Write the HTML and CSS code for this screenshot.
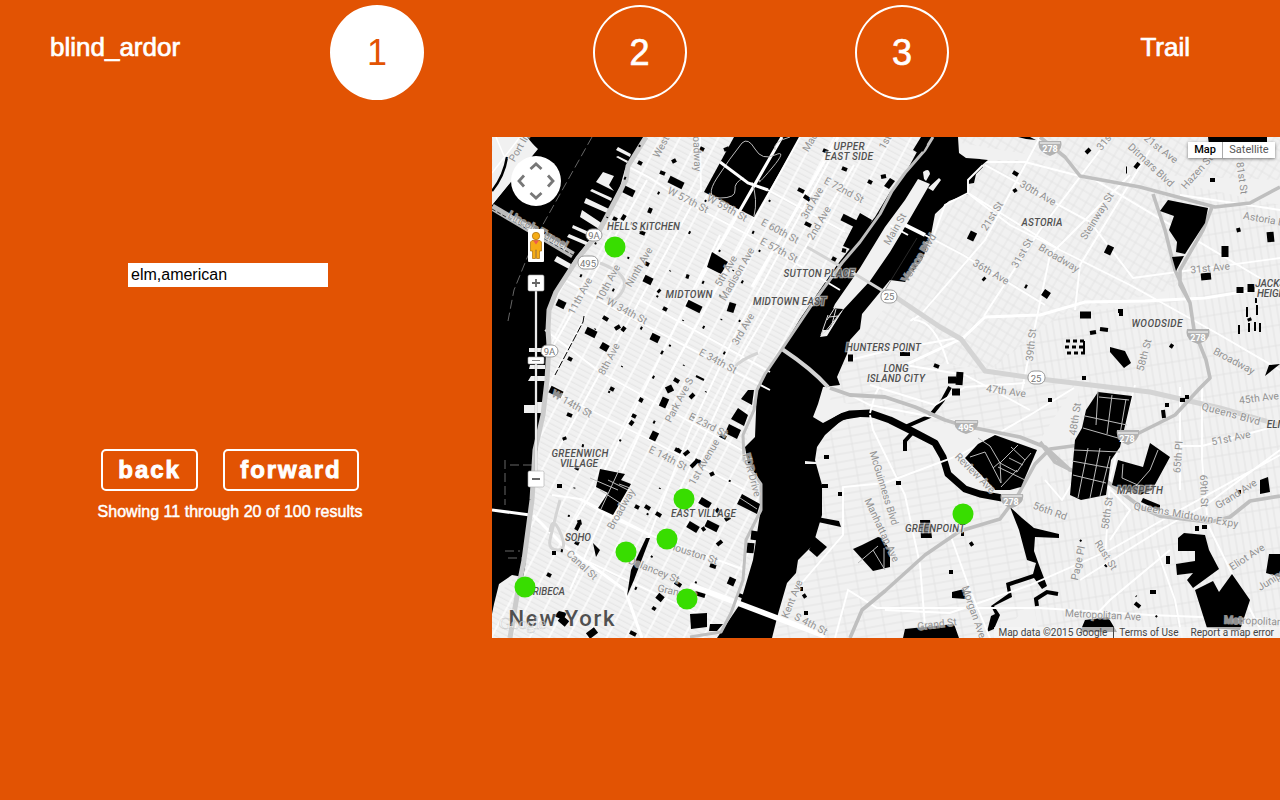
FILE: index.html
```html
<!DOCTYPE html>
<html lang="en">
<head>
<meta charset="utf-8">
<title>blind_ardor</title>
<link rel="stylesheet" href="styles.css">
</head>
<body>
<header class="top">
  <a class="brand">blind_ardor</a>
  <nav class="steps"><a class="step active">1</a><a class="step">2</a><a class="step">3</a></nav>
  <a class="trail">Trail</a>
</header>
<main class="content">
  <section class="panel">
    <input class="search" type="text" value="elm,american">
    <div class="pager"><button class="btn back">back</button><button class="btn forward">forward</button></div>
    <p class="status">Showing 11 through 20 of 100 results</p>
  </section>
  <section class="map">
    <svg class="tiles" viewBox="492 137 788 501" width="788" height="501">
      <defs>
        <pattern id="gm" width="17" height="5.2" patternUnits="userSpaceOnUse" patternTransform="rotate(28)"><path d="M0 1H17" stroke="#e0e0e0" stroke-width=".8"/><path d="M2 0V6" stroke="#fff" stroke-width="1.4"/></pattern>
        <pattern id="ga" width="24" height="9" patternUnits="userSpaceOnUse" patternTransform="rotate(31)"><path d="M0 1H24M3 0V9M11 0V9M18 0V9" stroke="#e3e3e3" stroke-width=".9"/></pattern>
        <pattern id="gq" width="7" height="20" patternUnits="userSpaceOnUse" patternTransform="rotate(-9)"><path d="M0 1H7M2 0V20" stroke="#e2e2e2" stroke-width=".9"/></pattern>
        <pattern id="gb" width="19" height="8" patternUnits="userSpaceOnUse" patternTransform="rotate(-10)"><path d="M0 1H19M2 0V8" stroke="#e2e2e2" stroke-width=".9"/></pattern>
      </defs>
      <rect x="492" y="137" width="788" height="501" fill="#f1f1f1"/>
      <path fill="url(#gm)" d="M642 137H925L905 174 875 217 760 384 745 447 762 487 760 514 740 604 717 638H492V600L525 567 547 387 552 297Z"/>
      <path fill="url(#ga)" d="M980 160H1150L1195 270 1170 290 1060 315 990 370 850 350 900 290Z M492 137H527L492 205ZM925 137H1280V180L1150 175Z"/>
      <path fill="url(#gq)" d="M1155 178L1280 205V638H1040L1015 510 1070 440 1080 385 990 368 1060 315 1170 300Z"/>
      <path fill="url(#gb)" d="M817 447L842 420 880 423 925 445 945 480 1000 502 1040 590 1000 638H775L790 580 822 504Z M850 345L985 372 1075 385 1040 440 950 425 830 400Z"/>

      <!-- rivers -->
      <g fill="#000">
        <path d="M527 137H644L625 169 620 187 602 224 574 260 552 297 547 330 547 387 535 464 530 514 525 567 523 577 512 575 499 584 494 604 492 614V205L512 180 537 149Z"/>
        <path d="M925 137H958L959 153 966 158 980 159 983 167 976 174 974 183 968 184 968 194 949 201 935 214 930 240 922 260 905 282 890 280 862 314 860 329 850 340 847 354 837 377 840 385 823 387 818 404 813 417 823 423 842 413 870 411 890 418 860 417 842 420 825 435 817 447 815 460 822 485 822 515 813 545 798 560 796 573 787 583 778 614 772 638H717L740 604 753 560 760 514 762 487 748 465 745 447 755 437 757 387 782 349 800 319 837 265 875 217 890 192 905 174Z"/>
        <path d="M734 137H800L754 217 704 192Z"/>
        <path d="M860 213L872 220 863 240 850 249 843 246ZM921 137L927 137 918 153 913 150ZM890 178L895 181 889 189 884 186Z"/>
      </g>
      <path fill="none" stroke="#000" stroke-width="7" stroke-linejoin="round" d="M823 430Q838 417 850 414L870 413 890 420 910 430 935 443 943 457 948 474 965 489 980 494 1002 498"/>
      <path d="M1010 507L1022 518 1034 528 1059 534 1059 538 1035 537 1034 551 1039 565 1047 586 1042 589 1034 578 1010 586 1012 597 994 606 1000 615 994 629 987 632 991 616 995 614 991 606 1008 594 1006 583 1033 574 1036 563 1027 560 1019 530Z"/>
      <path fill="none" stroke="#000" stroke-width="4" d="M950 387L943 400 930 416 905 427M914 431L905 441 905 451M1037 606L1036 599 1047 592 1058 594"/>
      <!-- island -->
      <path fill="#f1f1f1" d="M918 179L930 184 908 222 890 252 870 281 843 310 827 336 820 337 835 304 860 268 885 227 905 200ZM924 179L923 172Q929 167 930 174L926 181ZM939 178L941 180 933 191 928 188Z"/>
      <path d="M830 308L843 309 828 330 823 330Z"/><path d="M836 306L827 320M842 311L825 332 821 335 828 315M836 309L832 324M829 317L838 316" stroke="#ddd" fill="none"/>
      <path d="M890 225L908 235" stroke="#fff" stroke-width="2"/><path d="M905 225L925 235" stroke="#fff" stroke-width="4"/><path d="M917 238L885 290" stroke="#444" stroke-width=".6"/>
      <!-- piers -->
      <g fill="#f1f1f1">
        <path d="M618 147L631 154 630 157 616 150ZM618 156L628 161 627 163 616 157ZM603 172L614 176 609 185 614 191 596 182ZM592 189L612 198 611 201 590 191ZM586 198L609 209 607 213 584 203ZM582 210L603 224 599 229 580 217ZM573 225L596 235 594 238 572 228ZM569 234L590 243 588 246 567 237ZM557 256L571 264 569 269 554 261Z"/>
        <path d="M537 405H524V413H547V402H537ZM529 348H545V352H529ZM530 365H545V369H529ZM531 376H546V381H528ZM493 137H525L538 149 492 205Z"/>
        <path d="M805 461L816 462V464H805Z"/>
      </g>
      <path d="M492 191Q504 176 507 157" fill="none" stroke="#000" stroke-width="2.5"/>
      <path d="M492 173L520 137M496 137L504 156" fill="none" stroke="#fff" stroke-width="1.500"/>
      <path d="M592 137L541 228 527 258 514 290 508 321M505 460V505M510 465H532M505 551H520M508 558H522" fill="none" stroke="#666" stroke-width="1" stroke-dasharray="9 4"/>

      <!-- main streets -->
      <g fill="none" stroke="#fff" stroke-width="1.9">
        <path d="M629 167L650 178 690 204 750 236 840 290M565 280L620 312 770 390M545 330L600 372 745 452M550 390L660 445 745 490M552 495L580 499 610 517 660 539 745 570M585 560L700 615M647 180L551 350M720 235L600 480 575 520M700 190L640 300 555 455M800 137L650 410 570 590M835 150L735 335 690 430 640 560M854 165L745 350 675 500M700 137L701 192M640 300L770 372M768 190L845 232"/>
        <path d="M983 162H1025L1095 180 1280 290M1040 137L985 240 923 312M970 195L1010 225 1070 255 1130 285 1220 335 1280 370M925 235L963 255 1045 305M983 165L968 180 968 193 1060 250M968 193L945 205 932 240M985 165L1090 222 1133 278 1280 258M1110 137L1040 230 984 316M1130 175L1050 255 1030 350 1022 390M1180 195L1280 210M1075 310L1080 265 1150 150M850 395L870 405 975 425M850 360L890 350 963 337M905 365L965 375 1030 410M870 385L935 405 965 387 1025 383M914 320Q935 320 948 364M923 313Q905 325 914 318"/>
        <path d="M870 413L875 395 879 387M870 415L873 430 905 495 920 565 926 638M835 638L848 590 877 608H1040L1150 615 1280 620M800 585L843 535 843 487 885 483 960 455 1030 415 1074 388M945 520L970 590 990 638M885 610L950 613 1030 585 1110 550 1180 510 1280 455M1080 580L1160 530 1210 502 1280 450M1075 637L1110 600 1170 550M1157 550L1175 600 1182 638M1208 525L1240 590 1265 638M1202 387L1202 460 1207 515M1180 387V490M1135 385L1120 440 1110 480 1105 560M1096 475L1130 510 1110 540M1080 470L1062 500 1045 480M1180 446H1202L1280 425"/>
      </g>
      <g fill="none" stroke="#fff" stroke-width="3">
        <path d="M963 338L985 317 1040 315 1085 302 1145 301 1205 298 1280 286M580 499L650 535M905 365L965 337M533 515L563 545 625 590 642 638M492 510L530 515M782 137L700 280M838 137L752 287"/>
        <path d="M690 585L825 636" stroke-width="5.5"/>
      </g>
      <!-- highways -->
      <g fill="none" stroke="#d4d4d4" stroke-width="5" stroke-linejoin="round">
        <path d="M646 137L628 166 626 180 597 235 578 258 556 292 549 310 548 330 549 345 547 380 543 415 535 450 532 500 524 560 518 590 510 638" stroke="#ccc"/>
        <path d="M885 290L940 327 961 339 985 371 1040 379 1150 392 1220 408 1280 425"/>
        <path d="M492 207L573 255" stroke-width="7" stroke="#bbb"/><path d="M492 209L573 255" stroke="#333" stroke-width="1" stroke-dasharray="4 2"/>
        <path d="M850 271L888 294M560 500Q552 530 550 540T558 550 560 532 550 532M600 263Q631 275 623 290T607 297M758 353Q740 360 735 367M807 247L840 266" stroke-width="3"/>
        <path d="M782 349Q812 369 828 387" stroke-width="4"/>
      </g>
      <g fill="none" stroke="#bfbfbf" stroke-width="4" stroke-linejoin="round">
        <path d="M933 137L925 150 905 173 892 191 880 214 860 242 842 263 815 300 782 349 765 374 757 390 754 410 743 435 744 460 761 484 761 510 746 540 743 580 731 613 721 632 690 637" stroke-width="3"/>
        <path d="M1040 137L1065 157 1080 176 1140 187 1215 207 1250 203 1280 187M1153 194L1165 230 1175 270 1190 303 1194 330 1206 360 1210 378 1200 388 1175 415 1135 435 1080 445 1050 449 1035 464 1018 495 1000 519 960 531 925 555 885 591 862 610 850 638M1212 207L1203 230 1180 270 1180 285 1190 303" stroke-width="3.600"/>
        <path d="M830 388L850 395 885 397 915 407 945 420 965 426 1020 437 1045 447 1070 470 1105 480 1142 508 1160 516 1210 522 1230 517 1250 501 1280 496M1040 442L1055 462 1075 472" stroke-width="3.800"/>
      </g>

      <!-- parks and cemeteries -->
      <g>
        <path d="M995 435L1037 450 1021 487 1010 490 995 490 965 458 978 444Z"/>
        <path d="M1098 392L1132 396 1120 447 1111 460 1106 495 1081 500 1070 495 1075 440 1082 428 1086 410Z"/>
        <path d="M1150 443L1170 457 1152 490 1140 495 1112 485 1118 460 1143 467ZM1143 498L1160 505 1160 511 1141 502Z"/>
        <path d="M1168 200L1208 208 1205 223 1185 254 1176 252 1177 242 1169 230 1174 216 1160 211ZM1172 257L1184 256 1176 271Z"/>
        <path d="M1178 538L1184 533 1205 535 1209 550 1219 569 1193 588 1187 580 1193 573 1177 575 1176 564 1195 561 1195 551 1178 551ZM1195 590L1213 581 1219 592 1232 574 1250 600 1240 630 1207 628Z"/>
        <path d="M1208 137H1267V153H1210ZM1269 554L1280 554V577L1266 573ZM1085 620L1108 617 1117 632 1080 632ZM1260 480L1268 477 1270 492 1260 494ZM1110 347L1125 351 1131 363 1124 368 1110 352Z"/>
        <path d="M853 549L862 545 878 537 882 538 890 550 890 567 873 571Z"/>
        <path d="M600 469L625 474 621 480 631 484 613 515 598 508 608 493 596 487Z"/>
        <path d="M712 252L728 262 721 274 707 267Z"/>
        <path d="M748 390H754L752 405 741 399ZM738 408L748 415 744 426 731 419ZM729 424L741 430 737 439 725 433ZM742 494L760 504 757 514 737 504ZM690 614L707 613V627L691 629ZM710 624H723L717 631H709Z"/>
        <path d="M815 537L827 547 817 557 809 550ZM817 517L839 521 841 527 818 522ZM593 543L600 550 596 557ZM650 538L634 580 627 596 631 570 646 538ZM952 592L964 589 966 599 952 598ZM920 520L930 520 932 538 921 538ZM905 629L954 624 959 638H903ZM1269 365L1280 364 1265 376Z"/>
        <path d="M559 611L567 613 563 620 554 616ZM1018 137L1030 137 1036 140 1026 139ZM979 159L988 160 982 165ZM982 362L978 362Z"/>
      </g>
      <g fill="none" stroke="#bbb" stroke-width="1">
        <path d="M978 438L990 446 1000 463 1018 445M970 457L985 452 1001 483 1000 462 993 468M1011 447L1025 460 1031 453M1000 463L1017 472 1025 460M998 467L1025 480M1017 470L1001 487M1009 458L1023 465"/>
        <path d="M1099 397L1129 400M1085 416L1127 425M1083 428L1125 440M1098 391L1096 425M1112 395L1107 434M1126 399L1119 440M1074 450L1120 452M1072 461L1110 468M1073 475L1106 483M1088 448L1078 498M1100 448L1090 498M1110 456L1100 496M1158 450L1150 470 1135 487M1123 464L1122 478 1140 486M600 490L620 503M608 480L628 490M619 470L601 509M590 478L618 490M619 484L630 488"/>
        <path d="M742 143Q730 158 717 178T720 198 735 190 744 178M742 143Q748 137 755 149T775 155 772 168 760 180M752 182Q758 200 754 216M790 137Q772 142 775 150M858 563L878 546M873 550L885 570M884 548L884 568M740 498L757 509"/>
      </g>
      <path fill="none" stroke="#fff" stroke-width="3" d="M720 162L748 183 768 190"/>

      <!-- building footprints -->
      <g fill="none" stroke="#000">
        <path stroke-width="7" d="M624 189l10 5M669 179l14 7M586 330l10 5M601 345l7 4M557 302l8 4M644 278l8 4M687 303l14 7M651 336l8 4M842 217l14 7M668 386l3 6M652 440l4-8M550 389l12 6M688 524l10 6M700 500l10 6M730 585l3-7M658 600l4-5M596 630l-8 6M560 618l7 6M706 523l12 6M1240 287l0 6M1251 284l0 8M1225 257v-11M1201 277l10-1M1107 254l4-8M1270 232l1 10M1080 315h11M1045 250h0M960 372l-1 13M948 380h8M952 392h8M1044 297l4-6M970 240l4-8M730 312l3-9M662 407l4-9M750 553l1-10M754 540l1-9M848 358h5M1127 170l-1 0M920 150l4-7"/>
        <path stroke-width="4" d="M638 162l4 2M672 162l4-2M660 172l5 2M700 148l4 2M724 150l5-2M649 213l2-5M613 218l4 2M622 220l3-5M640 232l5 2M645 263l4 2M658 290l2 2M686 276l3 1M615 329l5-3M603 317l5 3M663 308l4 2M661 352l2 1M622 331l3-4M568 358l4 2M610 388l4 2M567 414l5 2M632 415l4 2M564 437l1 3M557 486h5M640 402l2-4M630 425l3-4M575 467l4 2M690 398l4-4M674 379l5 3M720 435l6 3M675 449l6 3M695 460l6 3M684 455l5-4M691 467l5-5M710 475l4-2M725 520l5-3M716 512l3-3M717 545l5-4M702 530l3-2M710 565l6 2M645 506l5 3M656 513l5 3M635 506l4 2M579 520l1 5M552 553h4M547 574l4 2M580 522l-4 8M575 542l4 2M653 610l2-3M675 582l6 4M695 593l10 3M739 595l5 2M630 632l6 3M798 189l6 3M804 196l6 4M842 168l5 2M868 181l4 2M881 177l5-1M823 150l5 2M805 223l6 3M832 258l4 2M842 250l4 1M1013 172l5 3M1014 189l2 3M1135 168l4-5M1086 153l4-4M1210 180h5M1249 318l1 3M983 278l2 2M1025 286l2 1M900 354h10M934 365l5 2M1090 333l6-1M1100 329l8 1M1238 228l1 4M1170 345l3 2M1082 378h4M970 545l3-2M896 483h5M824 457h5M838 494h4M822 486h6M800 589h3M804 613h4M803 597l3-2M961 534h3M949 572h4M1048 400h4M1163 410l1 8M1165 405h4M1168 556v8M1150 592h6M1135 603l5 4M1197 526v5M1202 527h5M1238 492h3M1180 400h5M1185 397h4M1045 354h0M1118 311h5M1119 314h4"/>
        <path stroke-width="3" stroke-dasharray="4 3" d="M1066 341h20M1065 347h20M1067 353h19"/>
        <path stroke-width="2" d="M1247 307v10M1257 305v10M1239 325v9M1249 323v9M1255 322v9M1260 323v9M1084 341v12M696 376l8 4M510 370v10M521 372h22M1256 298v5"/>
        <path stroke-width="1" d="M584 316L583 322 555 375" stroke-dasharray="8 2"/>
        <path stroke-width="2" stroke-dasharray="2 33 3 41 1 27" d="M640 145L570 300M674 160L590 340M706 200L600 410M720 250L610 460M770 200L650 430M740 320L640 530M700 460L620 620M590 410L560 560M730 480L690 600M760 250L710 340M1080 540L1170 630"/>
      </g>

      <!-- route shields -->
      <g class="shield">
        <rect x="586" y="229" width="16" height="12" rx="6"/><text x="594" y="239">9A</text>
        <rect x="578" y="256" width="20" height="13" rx="6"/><text x="588" y="267">495</text>
        <rect x="541" y="345" width="17" height="12" rx="6"/><text x="549.500" y="355">9A</text>
        <rect x="881" y="290" width="16" height="13" rx="6"/><text x="889" y="300">25</text>
        <rect x="1028" y="371" width="17" height="13" rx="6"/><text x="1036" y="382">25</text>
      </g>
      <g class="interstate">
        <path d="M1039 141H1061Q1064 151 1050 156Q1036 151 1039 141ZM1187 329H1209Q1212 340 1198 344Q1184 340 1187 329ZM955 420H978Q980 430 966 434Q952 430 955 420ZM1001 494H1023Q1025 504 1012 508Q998 505 1001 494ZM1117 430H1139Q1141 440 1128 445Q1115 441 1117 430Z"/>
        <path d="M1040 143H1060M1188 332H1208M956 422H977M1002 496H1022M1118 433H1138" stroke="#fff" fill="none"/>
        <text x="1050" y="152">278</text><text x="1198" y="340.500">278</text><text x="966" y="430.500">495</text><text x="1011" y="505">278</text><text x="1127" y="441.500">278</text>
      </g>

      <!-- street labels -->
      <g class="street">
        <text transform="translate(520 146) rotate(-60)">Port Im</text><text transform="translate(663 143) rotate(-62)">West E</text>
        <text transform="translate(697 149) rotate(88)">Broadway</text><text transform="translate(688 200) rotate(27)">W 57th St</text>
        <text transform="translate(727 208) rotate(29)">W 59th St</text><text transform="translate(780 231) rotate(28)">E 60th St</text>
        <text transform="translate(779 250) rotate(28)">E 57th St</text><text transform="translate(844 190) rotate(28)">E 72nd St</text>
        <text transform="translate(812 203) rotate(-60)">3rd Ave</text><text transform="translate(819 223) rotate(-60)">2nd Ave</text>
        <text transform="translate(810 142) rotate(-60)">Mad</text><text transform="translate(885 142) rotate(-60)">1st</text>
        <text transform="translate(726 271) rotate(-60)">5th Ave</text><text transform="translate(737 274) rotate(-60)">Madison Ave</text>
        <text transform="translate(743 329) rotate(-60)">3rd Ave</text><text transform="translate(580 296) rotate(-62)">11th Ave</text>
        <text transform="translate(608 283) rotate(-62)">10th Ave</text><text transform="translate(639 267) rotate(-60)">Ninth Ave</text>
        <text transform="translate(609 359) rotate(-62)">8th Ave</text><text transform="translate(627 311) rotate(28)">W 34th St</text>
        <text transform="translate(718 361) rotate(28)">E 34th St</text><text transform="translate(572 404) rotate(29)">W 14th St</text>
        <text transform="translate(708 425) rotate(27)">E 23rd St</text><text transform="translate(668 458) rotate(27)">E 14th St</text>
        <text transform="translate(679 400) rotate(-62)">Park Ave S</text><text transform="translate(704 462) rotate(-60)">1st Avenue</text>
        <text transform="translate(621 509) rotate(-60)">Broadway</text><text transform="translate(582 565) rotate(43)">Canal St</text>
        <text transform="translate(654 570) rotate(22)">Delancey St</text><text transform="translate(693 553) rotate(18)">Houston St</text>
        <text transform="translate(677 592) rotate(12)">Grand St</text><text transform="translate(752 475) rotate(75)">FDR Drive</text>
        <text transform="translate(895 229) rotate(-60)">Main St</text><text transform="translate(919 258) rotate(-58)">Vernon Blvd</text>
        <text transform="translate(992 216) rotate(-58)">21st St</text><text transform="translate(1022 253) rotate(-60)">31st St</text>
        <text transform="translate(1038 193) rotate(30)">30th Ave</text><text transform="translate(991 272) rotate(30)">36th Ave</text>
        <text transform="translate(1059 258) rotate(31)">Broadway</text><text transform="translate(1031 345) rotate(-84)">39th St</text>
        <text transform="translate(1006 391) rotate(8)">47th Ave</text><text transform="translate(1097 216) rotate(-58)">Steinway St</text>
        <text transform="translate(1151 165) rotate(43)">Ditmars Blvd</text><text transform="translate(1161 149) rotate(38)">21st Ave</text>
        <text transform="translate(1105 141) rotate(-50)">31st</text><text transform="translate(1197 172) rotate(-48)">Hazen St</text>
        <text transform="translate(1242 178) rotate(82)">81st St</text><text transform="translate(1264 219) rotate(10)">Astoria B</text>
        <text transform="translate(1210 268) rotate(-6)">31st Ave</text><text transform="translate(1234 361) rotate(28)">Broadway</text>
        <text transform="translate(1144 355) rotate(-75)">58th St</text><text transform="translate(1259 398) rotate(-7)">45th Ave</text>
        <text transform="translate(1231 414) rotate(15)" textLength="60">Queens Blvd</text><text transform="translate(1231 438) rotate(-12)">51st Ave</text>
        <text transform="translate(1075 419) rotate(-81)">48th St</text><text transform="translate(1178 457) rotate(-86)">65th Pl</text>
        <text transform="translate(1204 491) rotate(88)">69th St</text><text transform="translate(1236 494) rotate(-32)">Grand Ave</text>
        <text transform="translate(1186 515) rotate(10)" textLength="106">Queens Midtown Expy</text><text transform="translate(1107 513) rotate(-82)">58th St</text>
        <text transform="translate(1106 555) rotate(58)">Rust St</text><text transform="translate(1078 563) rotate(-78)">Page Pl</text>
        <text transform="translate(1247 557) rotate(-33)">Eliot Ave</text><text transform="translate(1273 579) rotate(-32)">Juniper</text>
        <text transform="translate(1103 615) rotate(3)" textLength="76">Metropolitan Ave</text><text transform="translate(1258 621) rotate(2)">Metropolitan A</text>
        <text transform="translate(1050 511) rotate(20)">56th Rd</text><text transform="translate(975 473) rotate(45)">Review Ave</text>
        <text transform="translate(884 488) rotate(73)" textLength="77">McGuinness Blvd</text><text transform="translate(882 530) rotate(65)">Manhattan Ave</text>
        <text transform="translate(974 612) rotate(71)">Morgan Ave</text><text transform="translate(937 624) rotate(-7)">Grand St</text>
        <text transform="translate(792 599) rotate(-68)">Kent Ave</text><text transform="translate(811 624) rotate(27)">S 4th St</text>
        <text transform="translate(538 230) rotate(29)">Lincoln Tunnel</text>
      </g>
      <!-- district labels -->
      <g class="district">
        <text x="849" y="150" textLength="31">UPPER</text><text x="849" y="159.500" textLength="48">EAST SIDE</text>
        <text x="643.500" y="230" textLength="73">HELL'S KITCHEN</text><text x="689" y="298" textLength="47">MIDTOWN</text>
        <text x="819" y="277" textLength="71">SUTTON PLACE</text><text x="789.500" y="305" textLength="73">MIDTOWN EAST</text>
        <text x="1042" y="226" textLength="41">ASTORIA</text><text x="883.500" y="351" textLength="75">HUNTERS POINT</text>
        <text x="896" y="372">LONG</text><text x="896" y="382" textLength="58">ISLAND CITY</text>
        <text x="1157" y="327" textLength="51">WOODSIDE</text><text x="1277" y="287">JACKSON</text><text x="1277" y="297">HEIGHTS</text>
        <text x="1140" y="494" textLength="46">MASPETH</text><text x="935" y="531.500" textLength="60">GREENPOINT</text>
        <text x="580" y="457" textLength="57">GREENWICH</text><text x="579" y="467">VILLAGE</text>
        <text x="703.500" y="517" textLength="65">EAST VILLAGE</text><text x="578" y="541">SOHO</text><text x="546" y="594.500" textLength="38">TRIBECA</text><text x="1292" y="428">ELMHURST</text>
      </g>
      <text class="city" x="508.500" y="626" textLength="106">New York</text>
      <text class="logo" x="499" y="629" textLength="47">Google</text>
      <g fill="#38dd00"><circle cx="615" cy="247" r="10.500"/><circle cx="684" cy="499" r="10.500"/><circle cx="667" cy="539" r="10.500"/><circle cx="626" cy="552" r="10.500"/><circle cx="525" cy="587" r="10.500"/><circle cx="687" cy="599" r="10.500"/><circle cx="963" cy="514" r="10.500"/></g>

      <!-- pan, pegman and zoom controls -->
      <circle cx="536" cy="181" r="25" fill="#fff"/>
      <path d="M530.500 169L536 164 541.500 169M530.500 193L536 198 541.500 193M524 175.500L519 181 524 186.500M548 175.500L553 181 548 186.500" fill="none" stroke="#777" stroke-width="2.800"/>
      <rect x="528" y="229" width="16" height="33" rx="1" fill="#fff"/>
      <g fill="#f5ac16" stroke="#a96c08" stroke-width=".7"><path d="M532 240.500H540L541.500 242V251H539.500V258.500H536.500V250H535.500V258.500H532.500V251H530.500V242Z"/><circle cx="536" cy="236" r="3.700"/></g><path d="M533 240.500H539L536 244.500Z" fill="#ed5b4d"/>
      <path d="M535 291H537V472H535Z" fill="#fff" stroke="#999" stroke-width=".4"/>
      <g fill="#fff" stroke="#aaa" stroke-width=".6"><rect x="528" y="275" width="16" height="16" rx="1.500"/><rect x="528" y="357" width="16" height="7" rx="1"/><rect x="528" y="471" width="16" height="16" rx="1.500"/></g>
      <path d="M532 283H540M536 279V287M532 479H540" stroke="#666" stroke-width="1.800"/><path d="M532 360.500H540" stroke="#888" stroke-width="1"/>
    </svg>
    <div class="types"><span class="type on">Map</span><span class="type">Satellite</span></div>
    <div class="credits"><span class="data">Map data ©2015 Google</span><span class="terms">Terms of Use</span><span>Report a map error</span></div>
  </section>
</main>
</body>
</html>
```
FILE: styles.css
```css
* { box-sizing: border-box; }
body { margin: 0; width: 1280px; height: 800px; overflow: hidden; background: #e25303; color: #fff; font-family: "Liberation Sans", Arial, sans-serif; }
.top { display: flex; height: 137px; padding: 5px 90px 0 50px; font-size: 26px; -webkit-text-stroke: .7px currentColor; }
.brand { width: 280px; padding-top: 27px; line-height: 30px; }
.steps { display: flex; gap: 168.500px; }
.step { width: 94px; height: 95px; border: 2px solid #fff; border-radius: 50%; text-align: center; font-size: 36px; line-height: 92px; }
.active { background: #fff; color: #e25303; -webkit-text-stroke: 0; }
.trail { margin-left: auto; padding-top: 27px; line-height: 30px; }
.content { display: flex; }
.panel { width: 492px; padding-top: 126px; }
.search { display: block; width: 200px; height: 24px; margin-left: 128px; padding: 0 3px; border: 0; background: #fff; color: #000; font: 16px "Liberation Sans", Arial, sans-serif; }
.pager { display: flex; gap: 25px; margin: 162px 0 0 101px; }
.btn { height: 42px; padding: 0 0 1px; border: 2px solid #fff; border-radius: 5px; background: none; color: #fff; font: bold 24px "Liberation Sans", Arial, sans-serif; letter-spacing: 1.900px; -webkit-text-stroke: .9px #fff; }
.back { width: 97px; }
.forward { width: 136px; }
.status { width: 460px; margin: 11px 0 0; text-align: center; font-size: 16px; line-height: 20px; letter-spacing: .03px; -webkit-text-stroke: .5px #fff; }
.map { position: relative; width: 788px; height: 501px; overflow: hidden; font-family: Roboto, sans-serif; }
.tiles { display: block; }
.shield rect { fill: #fff; stroke: #999; }
.shield text { fill: #777; font-size: 9.500px; text-anchor: middle; }
.interstate { fill: #b2b2b2; }
.interstate text { fill: #fff; font-size: 9px; font-weight: bold; text-anchor: middle; }
.street { fill: #929292; font-size: 10.300px; text-anchor: middle; dominant-baseline: central; paint-order: stroke; stroke: rgba(241, 241, 241, .6); stroke-width: 2px; }
.district { fill: #505050; font-size: 10px; font-style: italic; font-weight: 500; text-anchor: middle; paint-order: stroke; stroke: rgba(241, 241, 241, .6); stroke-width: 2.500px; }
.city { fill: #505050; font-size: 22px; font-weight: 500; paint-order: stroke; stroke: rgba(241, 241, 241, .6); stroke-width: 2px; }
.logo { fill: rgba(255, 255, 255, .65); stroke: rgba(120, 120, 120, .3); stroke-width: .6px; font: 17px "Liberation Serif", serif; }
.types { position: absolute; top: 5px; right: 5px; display: flex; height: 16px; background: #fff; box-shadow: 0 1px 3px rgba(0, 0, 0, .5); font-size: 11px; line-height: 16px; color: #565656; }
.type { width: 52px; text-align: center; }
.on { width: 35px; border-right: 1px solid #aaa; color: #000; font-weight: 500; }
.credits { position: absolute; right: 0; bottom: 0; display: flex; height: 11px; padding: 0 6px 0 4px; background: rgba(245, 245, 245, .7); color: #444; font-size: 10px; line-height: 11px; white-space: nowrap; }
.data { padding-right: 6px; border-right: 1px solid #444; }
.terms { padding: 0 12px 0 5px; }
```
